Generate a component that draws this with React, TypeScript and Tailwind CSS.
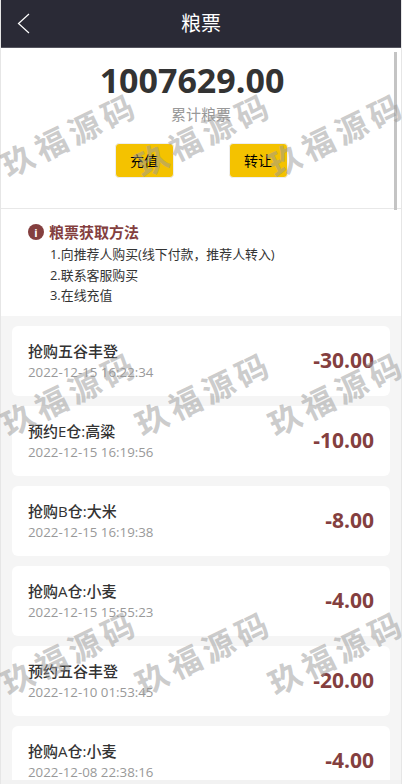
const FONT = "font-['Open_Sans','Noto_Sans_CJK_SC',sans-serif]";

const RECORDS = [
  { title: "抢购五谷丰登", time: "2022-12-15 16:22:34", amount: "-30.00" },
  { title: "预约E仓:高粱", time: "2022-12-15 16:19:56", amount: "-10.00" },
  { title: "抢购B仓:大米", time: "2022-12-15 16:19:38", amount: "-8.00" },
  { title: "抢购A仓:小麦", time: "2022-12-15 15:55:23", amount: "-4.00" },
  { title: "预约五谷丰登", time: "2022-12-10 01:53:45", amount: "-20.00" },
  { title: "抢购A仓:小麦", time: "2022-12-08 22:38:16", amount: "-4.00" },
];

const MARKS = [
  { left: 70, top: 135 },
  { left: 204, top: 135 },
  { left: 337, top: 135 },
  { left: 70, top: 394 },
  { left: 204, top: 394 },
  { left: 337, top: 394 },
  { left: 70, top: 653 },
  { left: 204, top: 653 },
  { left: 337, top: 653 },
];

function RecordCard({ title, time, amount }: { title: string; time: string; amount: string }) {
  return (
    <div className="flex h-[70px] shrink-0 items-center justify-between rounded-md bg-white px-4">
      <div>
        <p className="text-[15px] leading-[20px] font-medium text-[#333]">{title}</p>
        <p className="mt-[1px] text-[13.3px] leading-[20px] text-[#999]">{time}</p>
      </div>
      <span className="-mt-px text-[21px] font-bold text-[#843f3f]">{amount}</span>
    </div>
  );
}

export default function App() {
  return (
    <div className={`relative h-[784px] overflow-hidden bg-[#e6e6e6] ${FONT}`}>
      <div className="mx-px flex h-[784px] flex-col overflow-hidden border-b-4 border-[#f2f2f2] bg-[#f5f5f5]">
        <header className="relative flex h-[48px] shrink-0 items-center justify-center border-b border-[#55555f] bg-[#2a2a36] pt-px">
          <svg className="absolute left-[16px] top-[13px]" width="13" height="21" viewBox="0 0 13 21" fill="none" stroke="#fff" strokeWidth="1.2">
            <path d="M12 1 1.5 10.5 12 20" />
          </svg>
          <h1 className="text-[20px] text-white">粮票</h1>
        </header>

        <section className="relative flex h-[161px] shrink-0 flex-col items-center border-b border-[#e8e8e8] bg-white">
          <p className="mt-[9px] self-stretch pr-[18px] text-center text-[34px] leading-[46px] font-bold text-[#333]">1007629.00</p>
          <p className="mt-px text-[15px] leading-[20px] text-[#999]">累计粮票</p>
          <div className="mt-[19px] flex gap-[55px]">
            <button type="button" className="h-[35px] w-[59px] rounded-sm border border-[#eee] bg-[#f4c200] text-sm text-black">充值</button>
            <button type="button" className="h-[35px] w-[59px] rounded-sm border border-[#eee] bg-[#f4c200] text-sm text-black">转让</button>
          </div>
          <div className="absolute right-[4px] top-[4px] h-[158px] w-[3px] bg-[#c4c4c4]" />
        </section>

        <section className="h-[107px] shrink-0 bg-white pl-[27px] pt-[13px]">
          <div className="flex items-center gap-[5px]">
            <span className="flex size-[16px] items-center justify-center rounded-full bg-[#843f3f] text-[11px] leading-none font-bold text-white">i</span>
            <h2 className="text-[15px] leading-[20px] font-bold text-[#843f3f]">粮票获取方法</h2>
          </div>
          <ul className="mt-[2px] pl-[22px] text-[12.9px] leading-[20.5px] text-[#333]">
            <li>1.向推荐人购买(线下付款，推荐人转入)</li>
            <li>2.联系客服购买</li>
            <li>3.在线充值</li>
          </ul>
        </section>

        <main className="flex flex-col gap-[10px] px-[11px] pt-[10px]">
          {RECORDS.map((r) => (
            <RecordCard key={r.time} {...r} />
          ))}
        </main>
      </div>

      {MARKS.map((m) => (
        <span
          key={`${m.left}-${m.top}`}
          className="pointer-events-none absolute -translate-x-1/2 -translate-y-1/2 -rotate-[26deg] text-[32px] leading-none font-bold tracking-[5px] whitespace-nowrap text-[#999]/50"
          style={{ left: m.left, top: m.top }}
        >
          玖福源码
        </span>
      ))}
    </div>
  );
}
